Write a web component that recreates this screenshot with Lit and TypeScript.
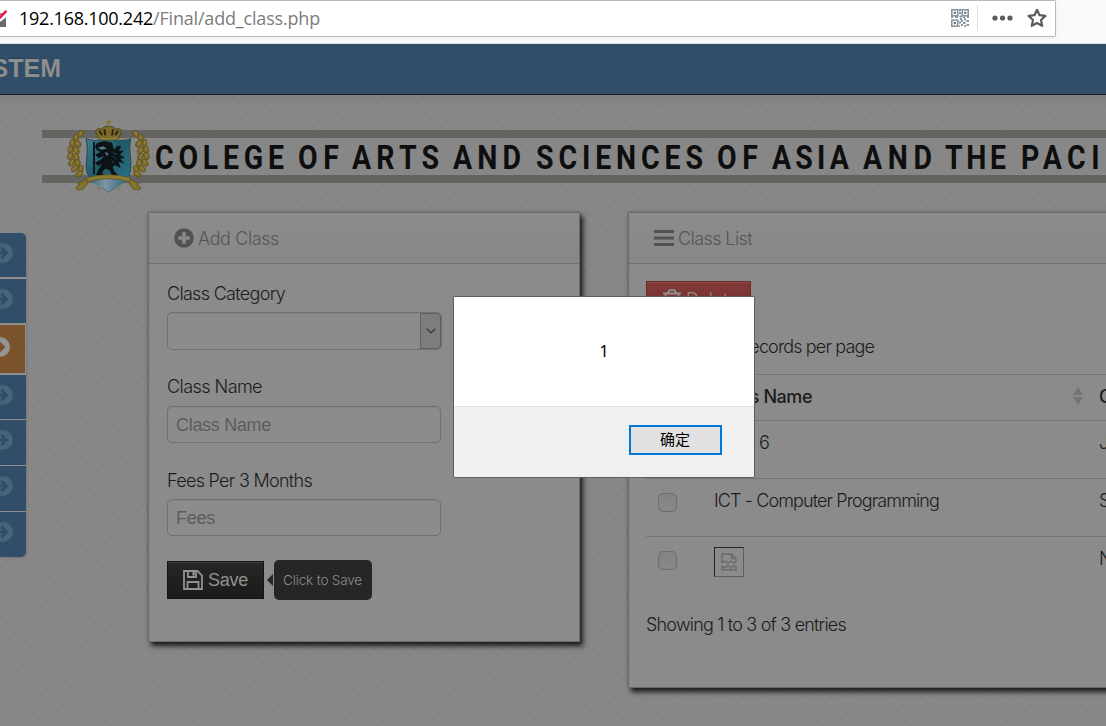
import { LitElement, html, css, svg } from "lit";
import { customElement, property } from "lit/decorators.js";

/** One line of text whose letter spacing is adjusted to fill a given width. */
@customElement("fit-text")
class FitText extends LitElement {
  @property({ type: Number }) width = 0;
  @property() text = "";
  static styles = css`
    :host { display: inline-block; white-space: pre; flex: none; }
    span { display: inline-block; }
  `;
  render() {
    return html`<span>${this.text}</span>`;
  }
  firstUpdated() {
    const s = this.renderRoot.querySelector("span") as HTMLElement;
    const w = s.getBoundingClientRect().width;
    s.style.letterSpacing = (this.width - w) / this.text.length + "px";
  }
}

const fit = (text: string, width: number) =>
  html`<fit-text .text=${text} .width=${width}></fit-text>`;

const words: [string, number, number][] = [
  ["COLEGE", 155, 129], ["OF", 298, 41], ["ARTS", 352, 87], ["AND", 453, 68],
  ["SCIENCES", 536, 167], ["OF", 717, 41], ["ASIA", 772, 77], ["AND", 863, 69],
  ["THE", 945, 61], ["PACIFIC", 1021, 138],
];
/** Horizontal squeeze of the banner lettering. */
const squeeze = 0.85;

const leaves = [
  [152, 72, -35], [138, 84, -15], [127, 100, 5], [144, 101, 35], [122, 119, -10], [139, 121, 30],
  [121, 138, -20], [139, 141, 20], [125, 158, -35], [143, 160, 5], [134, 176, -50], [152, 178, -15], [148, 192, -60],
];
const laurel = svg`${leaves.map(
  ([x, y, r]) => svg`
    <ellipse cx=${x} cy=${y} rx="8" ry="12" transform="rotate(${-r} ${x} ${y})" fill="#7b6928" stroke="#4f4620" stroke-width="1.5"/>
    <ellipse cx=${x - 1} cy=${y - 2} rx="2.4" ry="7" transform="rotate(${-r} ${x} ${y})" fill="#948139"/>`,
)}`;

const banner = html`
  <svg class="banner" viewBox="42 115 1064 85" width="1064" height="85">
    <defs>
      <linearGradient id="shield" x1="0" y1="0" x2="1" y2="1">
        <stop offset="0" stop-color="#3f7d8e"/><stop offset=".45" stop-color="#1f5a68"/><stop offset="1" stop-color="#2f7a90"/>
      </linearGradient>
      <linearGradient id="tip" x1="0" x2="1"><stop offset="0" stop-color="#2d6578"/><stop offset=".4" stop-color="#8095a3"/><stop offset="1" stop-color="#29687c"/></linearGradient>
    </defs>
    <rect x="42" y="130" width="1064" height="8" fill="#636360"/>
    <rect x="42" y="175" width="1064" height="8" fill="#636360"/>
    <g transform="translate(30 110) scale(.33333)">
      ${laurel}
      <g transform="translate(470 0) scale(-1 1)">${laurel}</g>
      <path d="M168 86C195 97 210 88 236 90C262 88 277 97 302 86C295 125 305 145 302 175C300 215 262 225 236 246C210 225 172 215 169 175C167 145 177 125 168 86Z" fill="url(#shield)" stroke="#25454f" stroke-width="3"/>
      <path d="M178 207H294C282 225 254 230 236 246C218 230 190 225 178 207Z" fill="url(#tip)"/>
      <path d="M192 96V192" stroke="#10171a" stroke-width="6"/>
      <path d="M200 100L222 93L246 98L252 120L262 107L274 109L266 122L281 122L270 134L285 143L270 146L283 160L266 156L272 174L256 166L248 170L252 182L264 195H246L238 180L226 176L216 186L220 195H198L206 178L216 162L204 168L195 158L214 148L222 138L206 144L195 134L212 126L200 120L195 110Z" fill="#0c1316"/>
      <path d="M203 113L220 109L230 116L214 119ZM224 126L236 130L231 138Z" fill="#4e7e8e"/>
      <path d="M248 128L262 134M248 138L260 150M243 148L252 160" stroke="#246070" stroke-width="2"/>
      <path d="M168 204Q236 184 302 204L300 216Q236 196 170 216Z" fill="#8d7a2e" stroke="#574d23" stroke-width="2"/>
      <path d="M170 208L142 221L148 226L137 233L142 240L160 237L172 222ZM300 208L328 221L322 226L333 233L328 240L310 237L298 222Z" fill="#86732c" stroke="#51481f" stroke-width="2"/>
      <path d="M202 230L210 241M270 230L262 241" stroke="#7b6b30" stroke-width="3"/>
      <path d="M206 86L196 62Q204 52 214 58Q222 46 236 50Q250 46 258 58Q268 52 276 62L266 86Q236 94 206 86Z" fill="#7d6c29" stroke="#4d4420" stroke-width="3"/>
      <path d="M208 62L216 76M223 58L226 76M249 58L246 76M264 62L256 76" fill="none" stroke="#2a2617" stroke-width="6"/>
      <path d="M209 84Q236 91 263 84" stroke="#968438" stroke-width="4" fill="none"/>
      <path d="M236 28V50M228 36H244" stroke="#86742c" stroke-width="5"/>
    </g>
    ${words.map(([w, x, len]) => svg`<text transform="translate(${x} 168.6) scale(${squeeze} 1)" textLength=${len / squeeze} lengthAdjust="spacing" class="word">${w}</text>`)}
  </svg>`;

const arrowCircle = (active: boolean) => html`
  <svg class="arrow ${active ? "on" : ""}" viewBox="0 0 20 20" width="20" height="20">
    <circle cx="10" cy="10" r="10" fill=${active ? "#949494" : "#4a6376"}/>
    <path d="M3.5 8.6H10L7.3 5.8L9.3 3.8L15.6 10L9.3 16.2L7.3 14.2L10 11.4H3.5Z" fill=${active ? "#7a532d" : "#304e68"}/>
  </svg>`;

@customElement("app-root")
class AppRoot extends LitElement {
  static styles = css`
    :host { display: block; width: 1106px; height: 726px; overflow: hidden; position: relative;
      font-family: Inter, "Noto Sans", sans-serif; font-weight: 300; font-size: 18px; color: #1c1c1c; }
    * { box-sizing: border-box; }
    svg { display: block; flex: none; }
    .chrome { height: 44px; background: #f9f9fa; border-bottom: 1px solid #e0e0e1; }
    .url { width: 1056px; height: 37px; background: #fff; border: 1px solid #b8b8b9; border-left: 0; border-radius: 0 2px 2px 0;
      box-shadow: 0 1px 4px #0000000d; display: flex; align-items: center; padding-bottom: 1px; }
    .address { display: flex; margin-left: 12px; flex: 1; font: 400 18px/24px "Open Sans", sans-serif; color: #000; }
    .path { color: #7d7d7d; }
    .sep { width: 1px; height: 26px; background: #dcdcdc; margin: 0 14px 0 8px; }
    .star { margin: 0 8px 0 14px; }
    .nav { height: 51px; background: #304e68; border-bottom: 1px solid #1b1f23; display: flex; }
    .brand { width: 61px; display: flex; justify-content: flex-end; overflow: hidden; font: 700 25px/49px "Liberation Sans", sans-serif; color: #8e8e8e; text-shadow: 0 -1px 0 #26435c; white-space: pre; }
    .page { height: 631px; padding-top: 20px; overflow: hidden;
      background: linear-gradient(#00000010, transparent 12px),
        repeating-linear-gradient(45deg, #ffffff03 0 2px, transparent 2px 5px, #00000003 5px 6px, transparent 6px 9px),
        repeating-linear-gradient(-45deg, #ffffff03 0 1px, transparent 1px 4px, #00000003 4px 5px, transparent 5px 7px), #878787; }
    .banner { margin-left: 42px; }
    .word { font: 700 33.5px Roboto, sans-serif; fill: #0e0e0e; }
    .row { display: flex; align-items: flex-start; margin-top: 12px; }
    .side { width: 26px; margin: 21px 122px 0 0; flex: none; background: #8e8e8e; border-radius: 0 5px 5px 0; overflow: hidden; display: flex; flex-direction: column; box-shadow: 1px 1px 2px #0002; }
    .item { height: 45px; margin-top: 1px; background: #304e68; padding: 10px 0 0; }
    .item.first { margin-top: 0; height: 44px; }
    .item.second { margin-top: 2px; height: 44px; }
    .item.on { width: 25px; height: 48px; margin-top: 2px; background: #7a532d; padding-top: 12px; }
    .item.after { margin-top: 2px; height: 44px; }
    .arrow { margin-left: -7px; }
    .arrow.on { margin-left: -10px; }
    .panel { flex: none; border: 1px solid #6a6a6a; background: #8b8b8b; box-shadow: 3px 4px 5px #1c1c1c, 0 0 3px #0003; }
    .add { width: 432px; height: 430px; margin-right: 48px; }
    .list { width: 620px; height: 476px; }
    .head { height: 51px; padding: 0 0 0 25px; border-bottom: 1px solid #727272; background: linear-gradient(#8c8c8c, #878787); display: flex; align-items: center; gap: 4px; color: #555; }
    .form { padding: 20px 18px; display: flex; flex-direction: column; align-items: flex-start; }
    .label { height: 20px; line-height: 20px; }
    .box { width: 274px; height: 37px; border: 1px solid #707070; border-radius: 5px; background: #8c8c8c; box-shadow: inset 0 1px 1px #0000000d; font: 400 18px/37px "Liberation Sans", sans-serif; color: #5c5c5c; padding-left: 8px; }
    .select { width: 275px; height: 38px; margin: 8px 0 27px; display: flex; justify-content: flex-end; padding: 0; }
    .drop { width: 21px; border: 1px solid #606060; background: #7d7d7d; display: flex; align-items: center; justify-content: center; border-radius: 0 4px 4px 0; }
    .name { margin: 9px 0 28px; }
    .fees { margin: 8px 0 24px; }
    .actions { display: flex; align-items: center; height: 40px; }
    .save { width: 97px; height: 38px; background: linear-gradient(#262626, #1b1b1b); border: 1px solid #151515; border-top: 1px solid #1a1a1a; box-shadow: inset 0 1px 0 #383838; display: flex; align-items: center; padding: 0 0 1px 15px; gap: 5px; color: #919191; font: 400 18px/36px "Liberation Sans", sans-serif; }
    .tri { border: 6px solid transparent; border-right-color: #262626; border-left: 0; margin-left: 3px; }
    .tip { width: 98px; height: 40px; background: #262626; border-radius: 5px; color: #8c8c8c; font-size: 13.5px; line-height: 40px; padding-left: 9px; margin-left: 1px; flex: none; }
    .body { padding: 17px 0 0 17px; }
    .delete { width: 105px; height: 38px; background: linear-gradient(#833b39, #6f2a27); border: 1px solid #6a2b29; box-shadow: inset 0 1px 0 #8e4a48; color: #8e8e8e; display: flex; align-items: center; padding: 0 0 2px 15px; gap: 4px; }
    .per { height: 55px; padding-top: 18px; line-height: 20px; padding-left: 98px; }
    .tr { display: grid; grid-template-columns: 68px 386px 140px; height: 58px; border-top: 1px solid #757575; line-height: 20px; padding-top: 12px; }
    .th { height: 46px; font-weight: 500; }
    .cell { display: flex; justify-content: space-between; padding-right: 17px; white-space: nowrap; }
    .grade { display: flex; gap: 6px; }
    .third { margin-left: -1px; }
    .check { width: 19px; height: 19px; margin: 2px 0 0 12px; border: 1px solid #6d6d6d; border-radius: 5px; background: linear-gradient(#828282, #8a8a8a); box-shadow: inset 0 0 0 1px #858585; }
    .broken { width: 30px; height: 30px; margin-top: -2px; border: 1px solid #5e5e5e; border-top-color: #262626; border-left-color: #262626; display: flex; align-items: center; justify-content: center; }
    .foot { margin-top: 21px; line-height: 20px; }
    .dialog { position: absolute; left: 453px; top: 296px; width: 302px; height: 182px; border: 1px solid #5e5e5e; border-radius: 2px; background: #f0f0f0; display: flex; flex-direction: column; }
    .msg { height: 110px; background: #fff; border-bottom: 1px solid #dfdfdf; text-align: center; font: 400 16px/109px "Noto Sans", sans-serif; color: #000; }
    .ok { align-self: flex-end; width: 93px; height: 30px; margin: 18px 32px 0 0; border: 2px solid #0078d7; background: #e1e1e1; text-align: center; color: #000; font: 400 15px/23px "Noto Sans CJK SC", sans-serif; padding-right: 1px; }
  `;

  private row(a: unknown, b: unknown, c: string) {
    return html`<div class="tr">${a}<div class="cell">${b}</div><span class="third">${c}</span></div>`;
  }

  render() {
    const check = html`<div class="check"></div>`;
    return html`
      <div class="chrome">
        <div class="url">
          <svg viewBox="0 0 7 18" width="7" height="18">
            <path d="M0 13L6 8.5V18H0Z" fill="#6a6a6a"/><path d="M0 4H3L0 7Z" fill="#8a8a8a"/><path d="M-1 9.6L6.5 1.8" stroke="#f0103f" stroke-width="2.4"/>
          </svg>
          <div class="address">${fit("192.168.100.242", 134)}<span class="path">${fit("/Final/add_class.php", 167)}</span></div>
          <svg viewBox="0 0 18 18" width="18" height="18" fill="none" stroke="#8996a1">
            <g stroke-width="1.6"><rect x=".8" y=".8" width="6" height="6"/><rect x="11.2" y=".8" width="6" height="6"/><rect x=".8" y="11.2" width="6" height="6"/></g>
            <path d="M2.7 3.8H4.9M13.1 3.8H15.3M2.7 14.2H4.9" stroke-width="2.2" stroke="#66737e"/>
            <path d="M8 1H10M8 4H10M0 8H2M4 8H7M8.5 7.5H11M12 8.5H14M16 8H18M9 10H11M13 10.5H15M10 12H12M15.5 12H18M8 13.5H10M12 14H14.5M10 16H12M15.5 16H18M8 17.2H9M13 17.2H15" stroke-width="2"/>
          </svg>
          <div class="sep"></div>
          <svg viewBox="0 0 21 6" width="21" height="6" fill="#5c5c5c"><circle cx="3" cy="3" r="2.6"/><circle cx="10.5" cy="3" r="2.6"/><circle cx="18" cy="3" r="2.6"/></svg>
          <svg class="star" viewBox="0 0 20 20" width="20" height="20"><path d="M10 1.8L12.5 7.2L18.4 7.9L14 12L15.2 17.9L10 15L4.8 17.9L6 12L1.6 7.9L7.5 7.2Z" fill="none" stroke="#5c5c5c" stroke-width="2.2" stroke-linejoin="round"/></svg>
        </div>
      </div>
      <div class="nav"><div class="brand">STEM</div></div>
      <div class="page">
        ${banner}
        <div class="row">
          <div class="side">
            ${["first", "second", "on", "after", "", "", ""].map((c) => html`<div class="item ${c}">${arrowCircle(c === "on")}</div>`)}
          </div>
          <div class="panel add">
            <div class="head">
              <svg viewBox="0 0 20 20" width="20" height="20"><circle cx="10" cy="10" r="9.8" fill="#525252"/><path d="M10 4.2V15.8M4.2 10H15.8" stroke="#8b8b8b" stroke-width="3.4"/></svg>
              ${fit("Add Class", 81)}
            </div>
            <div class="form">
              <div class="label">${fit("Class Category", 118)}</div>
              <div class="box select"><div class="drop"><svg viewBox="0 0 10 6" width="10" height="6"><path d="M.7 .7L5 5L9.3 .7" fill="none" stroke="#2c2c2c" stroke-width="1.1"/></svg></div></div>
              <div class="label">${fit("Class Name", 95)}</div>
              <div class="box name">${fit("Class Name", 95)}</div>
              <div class="label">${fit("Fees Per 3 Months", 145)}</div>
              <div class="box fees">${fit("Fees", 39)}</div>
              <div class="actions">
                <div class="save">
                  <svg viewBox="0 0 20 20" width="20" height="20" fill="none" stroke="#919191" stroke-width="1.8"><path d="M1 1H14.5L19 5.5V19H1ZM5 1V7H13V1M4.5 19V12H15.5V19"/><path d="M10.6 2V5.6" stroke-width="2.4"/></svg>
                  ${fit("Save", 40)}
                </div>
                <div class="tri"></div>
                <div class="tip">${fit("Click to Save", 79)}</div>
              </div>
            </div>
          </div>
          <div class="panel list">
            <div class="head">
              <svg viewBox="0 0 20 18" width="20" height="18"><path d="M0 2.5H20M0 9H20M0 15.5H20" stroke="#525252" stroke-width="3.2"/></svg>
              ${fit("Class List", 74)}
            </div>
            <div class="body">
              <div class="delete">
                <svg viewBox="0 0 20 20" width="20" height="20" fill="none" stroke="#8e8e8e" stroke-width="1.8"><path d="M1 4.5H19M6 4L7.5 1.2H12.5L14 4M3.5 5V19H16.5V5M7.5 8V16M12.5 8V16"/></svg>
                ${fit("Delete", 52)}
              </div>
              <div class="per">${fit("records per page", 130)}</div>
              <div class="tr th">
                <span></span>
                <div class="cell">${fit("Class Name", 98)}
                  <svg viewBox="0 0 10 18" width="10" height="18"><path d="M5 0L10 8H0ZM0 10H10L5 18Z" fill="#747474"/></svg>
                </div>
                <span class="third">Category</span>
              </div>
              ${this.row(check, html`<span class="grade">${fit("Grade", 39)}${fit("6", 10)}</span>`, "Junior")}
              ${this.row(check, fit("ICT - Computer Programming", 225), "Senior")}
              ${this.row(
                check,
                html`<div class="broken"><svg viewBox="0 0 16 18" width="16" height="18" fill="none" stroke="#6b6b6b" stroke-width="1.4"><path d="M1 10V1H10.5L15 5.5V10M10.5 1V5.5H15M1 9.5L4 8L7 10L10 8L12.5 10L15 8.5M1 17V13.5L4 15L7 12.5L10 15L12.5 12.5L15 14V17Z"/></svg></div>`,
                "Nursery",
              )}
              <div class="foot">${fit("Showing 1 to 3 of 3 entries", 200)}</div>
            </div>
          </div>
        </div>
      </div>
      <div class="dialog">
        <div class="msg">1</div>
        <div class="ok">确定</div>
      </div>
    `;
  }
}
